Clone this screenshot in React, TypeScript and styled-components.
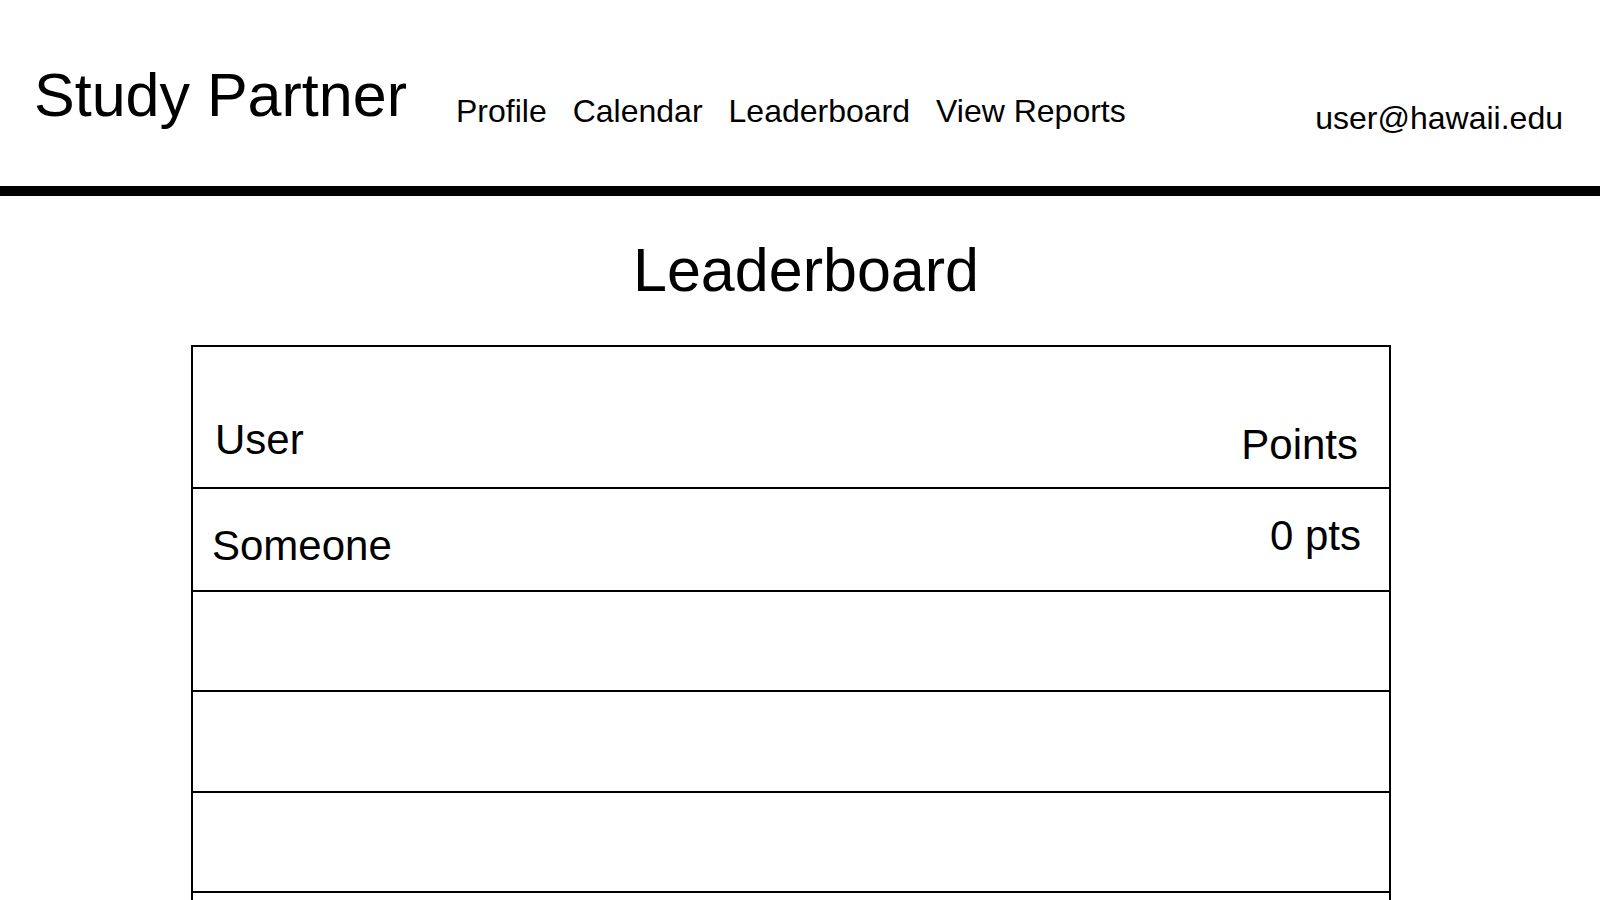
import React from "react";
import styled, { createGlobalStyle } from "styled-components";

const GlobalStyle = createGlobalStyle`
  * { box-sizing: border-box; }
  html, body {
    margin: 0;
    padding: 0;
    background: #ffffff;
  }
  body {
    font-family: "Liberation Sans", Arial, sans-serif;
    color: #000000;
    overflow: hidden;
  }
`;

const Page = styled.div`
  width: 1600px;
  min-height: 900px;
  background: #ffffff;
`;

const Header = styled.header`
  height: 186px;
  display: flex;
  align-items: flex-start;
  padding: 0 37px 0 34px;
`;

const Brand = styled.div`
  font-size: 61px;
  line-height: 1;
  margin-top: 65px;
  white-space: nowrap;
`;

const Nav = styled.nav`
  display: flex;
  gap: 26px;
  margin-left: 49px;
  margin-top: 95px;
`;

const NavLink = styled.a`
  font-size: 32px;
  line-height: 1;
  color: #000000;
  text-decoration: none;
  white-space: nowrap;
  cursor: pointer;
`;

const UserEmail = styled.div`
  margin-left: auto;
  margin-top: 102px;
  font-size: 32px;
  line-height: 1;
  white-space: nowrap;
`;

const Divider = styled.div`
  height: 10px;
  background: #000000;
`;

const Title = styled.h1`
  margin: 44px 0 0;
  padding-left: 12px;
  text-align: center;
  font-size: 61px;
  font-weight: 400;
  line-height: 1;
`;

const Board = styled.div`
  margin: 44px 0 0 191px;
  width: 1200px;
  border: 2px solid #000000;
  border-bottom: none;
`;

const HeadRow = styled.div`
  height: 142px;
  border-bottom: 2px solid #000000;
  display: flex;
  justify-content: space-between;
  align-items: flex-end;
  padding: 0 31px 0 22px;
`;

const HeadCell = styled.div<{ $lift: number }>`
  font-size: 42px;
  line-height: 1;
  margin-bottom: ${(p) => p.$lift}px;
`;

const Row = styled.div<{ $height: number }>`
  height: ${(p) => p.$height}px;
  border-bottom: 2px solid #000000;
  display: flex;
  justify-content: space-between;
  align-items: flex-start;
  padding: 0 28px 0 19px;
`;

const Cell = styled.div<{ $top: number }>`
  font-size: 42px;
  line-height: 1;
  margin-top: ${(p) => p.$top}px;
  white-space: nowrap;
`;

type Entry = { name: string; points: string };

const entries: Entry[] = [{ name: "Someone", points: "0 pts" }];
const emptyRowHeights = [100, 101, 100, 100, 100];

export default function App() {
  return (
    <Page>
      <GlobalStyle />
      <Header>
        <Brand>Study Partner</Brand>
        <Nav>
          <NavLink>Profile</NavLink>
          <NavLink>Calendar</NavLink>
          <NavLink>Leaderboard</NavLink>
          <NavLink>View Reports</NavLink>
        </Nav>
        <UserEmail>user@hawaii.edu</UserEmail>
      </Header>
      <Divider />
      <Title>Leaderboard</Title>
      <Board>
        <HeadRow>
          <HeadCell $lift={26}>User</HeadCell>
          <HeadCell $lift={21}>Points</HeadCell>
        </HeadRow>
        {entries.map((e) => (
          <Row key={e.name} $height={103}>
            <Cell $top={36}>{e.name}</Cell>
            <Cell $top={26}>{e.points}</Cell>
          </Row>
        ))}
        {emptyRowHeights.map((h, i) => (
          <Row key={`empty-${i}`} $height={h} />
        ))}
      </Board>
    </Page>
  );
}
